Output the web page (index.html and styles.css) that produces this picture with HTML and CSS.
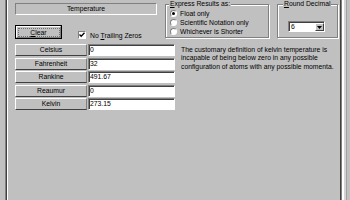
FILE: index.html
```html
<!DOCTYPE html>
<html>
<head>
<meta charset="utf-8">
<link rel="stylesheet" href="styles.css">
</head>
<body>
<div class="frame">
  <div class="top">
    <div class="left-top">
      <div class="title-panel">Temperature</div>
      <div class="controls">
        <div class="clear"><div class="bevel"><span class="focus"><u>C</u>lear</span></div></div>
        <div class="check">
          <span class="box"><svg width="6" height="6" viewBox="0 0 6 6"><path d="M0.5 2.5 L2.2 4.3 L5.5 0.8" fill="none" stroke="#000" stroke-width="1.3"/></svg></span>
          <span class="check-text">No <u>T</u>railing Zeros</span>
        </div>
      </div>
    </div>
    <div class="group express">
      <div class="legend"><u>E</u>xpress Results as:</div>
      <div class="radios">
        <div class="radio-row"><span class="radio on"></span>Float only</div>
        <div class="radio-row"><span class="radio"></span>Scientific Notation only</div>
        <div class="radio-row"><span class="radio"></span>Whichever is Shorter</div>
      </div>
    </div>
    <div class="group round">
      <div class="legend"><u>R</u>ound Decimal</div>
      <div class="select">
        <span class="select-value">6</span>
        <span class="select-btn"><svg width="5" height="3" viewBox="0 0 5 3"><path d="M0 0 H5 L2.5 3 Z" fill="#000"/></svg></span>
      </div>
    </div>
  </div>
  <div class="bottom">
    <div class="table">
      <div class="row"><div class="label">Celsius</div><div class="value">0</div></div>
      <div class="row"><div class="label">Fahrenheit</div><div class="value">32</div></div>
      <div class="row"><div class="label">Rankine</div><div class="value">491.67</div></div>
      <div class="row"><div class="label">Reaumur</div><div class="value">0</div></div>
      <div class="row"><div class="label">Kelvin</div><div class="value">273.15</div></div>
    </div>
    <p class="desc">The customary definition of kelvin temperature is incapable of being below zero in any possible configuration of atoms with any possible momenta.</p>
  </div>
</div>
</body>
</html>
```
FILE: styles.css
```css
html, body {
  margin: 0;
  height: 200px;
  overflow: hidden;
}
body {
  background: #c0c0c0;
  font-family: "Liberation Sans", Arial, sans-serif;
  font-size: 6.8px;
  color: #000;
}
.frame {
  margin-left: 5px;
  width: 335px;
  height: 200px;
  border-left: 1px solid #808080;
  border-right: 1px solid #808080;
  box-shadow: inset 1px 0 #404040, inset 2px 0 #fff, inset -1px 0 #404040,
    2px 0 0 #fff, 4px 0 0 #d4d4d4, 5px 0 0 #a0a0a0;
}
.top {
  display: flex;
  align-items: flex-start;
  gap: 8px;
  padding-left: 9px;
  height: 44px;
  box-sizing: border-box;
}
.left-top {
  width: 142px;
  padding-top: 3px;
}
.title-panel {
  height: 12px;
  box-sizing: border-box;
  border: 1px solid;
  border-color: #808080 #fff #fff #808080;
  text-align: center;
  line-height: 10px;
}
.controls {
  display: flex;
  align-items: flex-end;
  margin-top: 10px;
}
.clear {
  width: 47px;
  height: 14px;
  box-sizing: border-box;
  border: 1px solid #000;
  display: flex;
}
.clear .bevel {
  flex: 1;
  border: 1px solid;
  border-color: #fff #808080 #808080 #fff;
  padding: 0.5px;
  display: flex;
}
.clear .focus {
  flex: 1;
  border: 1px dotted #707070;
  display: flex;
  align-items: center;
  justify-content: center;
  line-height: 7px;
  overflow: visible;
}
.check {
  display: flex;
  align-items: center;
  margin-left: 16px;
  height: 8px;
}
.box {
  width: 8px;
  height: 8px;
  box-sizing: border-box;
  background: #fff;
  border: 1px solid;
  border-color: #808080 #fff #fff #808080;
  display: flex;
  align-items: center;
  justify-content: center;
}
.check-text {
  margin-left: 4px;
}
.group {
  margin-top: 4px;
  height: 34px;
  box-sizing: border-box;
  border: 1px solid #808080;
  box-shadow: inset 1px 1px #fff, 1px 1px 0 #fff;
}
.express { width: 104px; }
.round { width: 61px; }
.legend {
  width: max-content;
  margin: -5px 0 0 3px;
  padding: 0 1px;
  background: #c0c0c0;
  line-height: 8px;
  height: 8px;
}
.round .legend { margin-left: 5px; }
.radios {
  margin-top: 1px;
  padding-left: 4px;
}
.radio-row {
  display: flex;
  align-items: center;
  height: 9px;
}
.radio {
  width: 7px;
  height: 7px;
  box-sizing: border-box;
  border-radius: 50%;
  background: #fff;
  border: 1px solid;
  border-color: #808080 #fff #fff #808080;
  margin-right: 3px;
  display: flex;
  align-items: center;
  justify-content: center;
}
.radio.on::after {
  content: "";
  width: 3px;
  height: 3px;
  border-radius: 50%;
  background: #000;
}
.select {
  margin: 13px 0 0 10px;
  width: 37px;
  height: 11px;
  box-sizing: border-box;
  background: #fff;
  border: 1px solid;
  border-color: #808080 #fff #fff #808080;
  box-shadow: inset 1px 1px #404040;
  display: flex;
  align-items: stretch;
}
.select-value {
  flex: 1;
  padding-left: 2px;
  line-height: 9px;
}
.select-btn {
  width: 9px;
  margin: 1px 0 0;
  box-sizing: border-box;
  background: #c0c0c0;
  border: 1px solid;
  border-color: #fff #404040 #404040 #fff;
  display: flex;
  align-items: center;
  justify-content: center;
}
.bottom {
  display: flex;
  padding-left: 9px;
}
.table {
  display: flex;
  flex-direction: column;
  gap: 1.5px;
  width: 160px;
}
.row {
  display: grid;
  grid-template-columns: 72px 87px;
  column-gap: 1px;
  height: 12px;
}
.label {
  box-sizing: border-box;
  border: 1px solid;
  border-color: #fff #808080 #404040 #fff;
  text-align: center;
  line-height: 10px;
}
.value {
  box-sizing: border-box;
  background: #fff;
  border: 1px solid;
  border-color: #808080 #fff #fff #808080;
  box-shadow: inset 1px 1px #404040;
  padding-left: 1px;
  line-height: 10px;
}
.desc {
  margin: 0 0 0 6px;
  width: 158px;
  padding-top: 1.5px;
  line-height: 8.75px;
}
```
